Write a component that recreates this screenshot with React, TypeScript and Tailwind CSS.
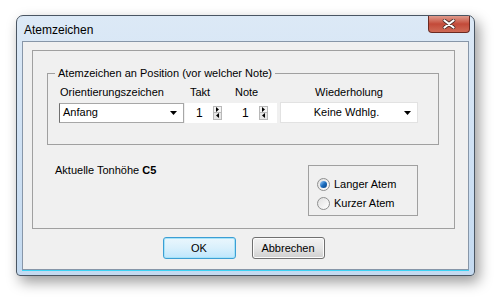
import React from "react";

const font = "font-['Liberation_Sans',Arial,sans-serif]";

function Arrow({ className = "" }: { className?: string }) {
  return (
    <svg width="7" height="4" viewBox="0 0 7 4" className={className}>
      <polygon points="0,0 7,0 3.5,4" fill="#000" />
    </svg>
  );
}

function Spin({ value }: { value: string }) {
  return (
    <div className="flex h-[20px] w-[46px] items-center bg-white">
      <span className="ml-[11px] w-[17px] text-[12px] leading-none text-black">{value}</span>
      <div className="flex flex-col">
        <div className="flex h-[7px] w-[9px] items-center justify-center border border-[#b8b8b8] bg-[#f4f4f4]">
          <svg width="3" height="5" viewBox="0 0 3 5">
            <polygon points="0,0 3,2.5 0,5" fill="#000" />
          </svg>
        </div>
        <div className="flex h-[7px] w-[9px] items-center justify-center border border-t-0 border-[#b8b8b8] bg-[#e6e6e6]">
          <svg width="3" height="5" viewBox="0 0 3 5">
            <polygon points="3,0 0,2.5 3,5" fill="#000" />
          </svg>
        </div>
      </div>
    </div>
  );
}

function Radio({ checked, label }: { checked?: boolean; label: string }) {
  return (
    <div className="flex h-[19px] items-center">
      <span className="flex h-[13px] w-[13px] items-center justify-center rounded-full border border-[#8e8f8f] bg-gradient-to-br from-[#e0e0e0] to-[#ffffff]">
        {checked && (
          <span className="h-[7px] w-[7px] rounded-full bg-gradient-to-br from-[#9fd4ff] via-[#1c6fc0] to-[#0b3f80]" />
        )}
      </span>
      <span className="ml-[4px] text-[11px] text-black">{label}</span>
    </div>
  );
}

export default function App() {
  return (
    <div className={`${font} h-[300px] w-[501px] bg-white pl-[16px] pt-[15px]`}>
      <div className="flex h-[261px] w-[459px] flex-col rounded-t-[7px] rounded-b-[4px] border border-[#4a5663] bg-gradient-to-b from-[#dce9f6] via-[#cfe1f4] to-[#c4daf0] shadow-[4px_6px_14px_rgba(0,0,0,0.4)]">
        <div className="flex h-[25px] items-start justify-between pl-[7px] pr-[4px]">
          <span className="mt-[5px] text-[12px] text-black">Atemzeichen</span>
          <div className="flex h-[17px] w-[42px] items-center justify-center rounded-b-[4px] border border-t-0 border-[#6b2a22] bg-gradient-to-b from-[#e09a8c] via-[#c34a39] to-[#cf6a56]">
            <svg width="14" height="10" viewBox="0 0 14 10">
              <path d="M2.5 1.5 L11.5 8.5 M11.5 1.5 L2.5 8.5" stroke="#4a2a26" strokeWidth="3.6" strokeLinecap="round" />
              <path d="M2.5 1.5 L11.5 8.5 M11.5 1.5 L2.5 8.5" stroke="#fff" strokeWidth="2.2" strokeLinecap="round" />
            </svg>
          </div>
        </div>

        <div className="mx-[5px] mb-[5px] flex flex-1 flex-col border border-[#8796a8] bg-[#f0f0f0] pl-[9px] pt-[8px] shadow-[0_1px_0_#3ad3f5]">
          <div className="flex h-[179px] w-[423px] flex-col border border-[#a0a0a0]">
            <fieldset className="ml-[14px] mt-[16px] h-[78px] w-[392px] border border-[#a0a0a0] pl-[11px]">
              <legend className="ml-[-4px] px-[3px] text-[11px] leading-[13px] text-black">
                Atemzeichen an Position (vor welcher Note)
              </legend>
              <div className="mt-[6px] flex text-[11px] leading-[13px] text-black">
                <span className="w-[126px] pl-[1px]">Orientierungszeichen</span>
                <span className="w-[46px] pl-[5px]">Takt</span>
                <span className="w-[49px] pl-[4px]">Note</span>
                <span className="w-[138px] text-center">Wiederholung</span>
              </div>
              <div className="mt-[3px] flex items-center">
                <div className="flex h-[20px] w-[125px] items-center justify-between border border-[#a7a7a7] border-l-[#707070] bg-white pl-[3px] pr-[6px]">
                  <span className="text-[11px] text-black">Anfang</span>
                  <Arrow />
                </div>
                <div className="ml-[1px]">
                  <Spin value="1" />
                </div>
                <Spin value="1" />
                <div className="ml-[3px] flex h-[21px] w-[138px] items-center border border-[#e2e2e2] bg-white pr-[6px]">
                  <span className="flex-1 pl-[8px] text-center text-[11px] text-black">Keine Wdhlg.</span>
                  <Arrow />
                </div>
              </div>
            </fieldset>

            <div className="mt-[20px] flex items-start">
              <span className="ml-[22px] mt-[-3px] text-[11px] text-black">
                Aktuelle Tonhöhe <b>C5</b>
              </span>
              <div className="ml-auto mr-[36px] flex h-[51px] w-[110px] flex-col border border-[#a0a0a0] pl-[8px] pt-[9px]">
                <Radio checked label="Langer Atem" />
                <Radio label="Kurzer Atem" />
              </div>
            </div>
          </div>

          <div className="mt-[8px] flex w-[423px] justify-center gap-[16px]">
            <button className="flex h-[22px] w-[73px] items-center justify-center rounded-[3px] border border-[#3c9ed4] bg-gradient-to-b from-[#eaf6fd] via-[#d9f0fc] to-[#bee6fd] text-[11px] text-black shadow-[inset_0_0_0_1px_#a6e3f8]">
              OK
            </button>
            <button className="flex h-[22px] w-[73px] items-center justify-center rounded-[3px] border border-[#707070] bg-gradient-to-b from-[#f2f2f2] via-[#e6e6e6] to-[#cfcfcf] text-[11px] text-black shadow-[inset_0_0_0_1px_#fcfcfc]">
              Abbrechen
            </button>
          </div>
        </div>
      </div>
    </div>
  );
}
